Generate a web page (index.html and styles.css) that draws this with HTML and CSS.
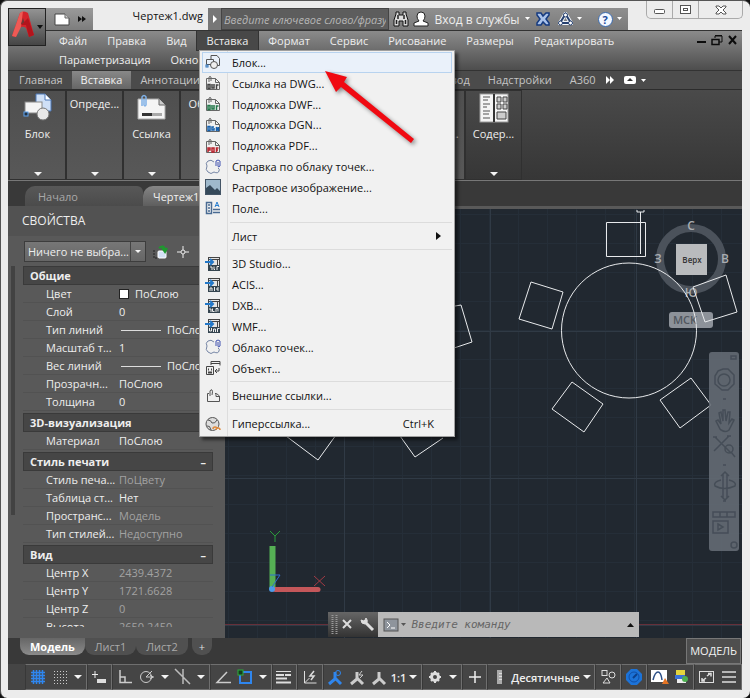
FILE: index.html
```html
<!DOCTYPE html>
<html lang="ru">
<head>
  <meta charset="UTF-8" />
  <meta name="viewport" content="width=device-width, initial-scale=1.0"/>
  <title>Чертеж1.dwg</title>
  <link rel="stylesheet" href="styles.css">
</head>
<body>
  <!-- shared icons -->
  <svg class="symbols" width="0" height="0">
    <symbol id="down" viewBox="0 0 6 4"><path d="M0 0h5l-2.5 3z" fill="#fff"/></symbol>
    <symbol id="doc" viewBox="0 0 16 16"><path d="M1.5 14.5v-11h9l4 4v7z"/><path d="M4 7V2q1-1 2 0v4M10.5 3.5v4h4"/></symbol>
    <symbol id="import" viewBox="0 0 16 16"><rect x="3.5" y="1.5" width="11" height="13" fill="#e4e4e4" stroke="#444"/><path d="M4 3.5h10M12.5 4v6" stroke="#444" fill="none"/><rect x="3" y="9" width="12" height="6" fill="#34444f"/><path d="M0 6h7M5 3l3 3-3 3" fill="none" stroke="#2378c8" stroke-width="2"/></symbol>
    <symbol id="cloud" viewBox="0 0 16 16"><path d="M9 3Q6 0 3 2 0 4 2 7 0 11 3 13 6 16 9 13 13 15 14 12 15 10 13 9" fill="none" stroke="#7585a5"/><path d="M11 7V2q2-2 4 0v5q-2 2-2 0V3" fill="none" stroke="#4052b0"/></symbol>
    <symbol id="scale" viewBox="0 0 17 17"><path d="M8 3v7l-6 5M8 9l6 6" fill="none" stroke-width="3"/></symbol>
  </svg>

  <div class="window">
    <header class="titlebar">
      <button class="app-button" aria-label="Меню приложения">
        <svg width="36" height="36" viewBox="0 0 36 36">
          <path d="M3 27 L11 4 Q15 1 19 4 L25 26 L20 28 L17 19 Q13 16 9 20 L7 28 Z" fill="#d4232b"/>
          <path d="M11 4 L14 2 L12 18 L7 28 L3 27 Z" fill="#ee5a55"/>
          <path d="M14 9 L16 15 L12 15 Z" fill="#6b3a36"/>
          <path d="M12 16 L17 16 L20 28 L25 26 L19 9 Z" fill="#b3141c"/>
          <path d="M28 16 h6 l-3 4 z" fill="#111"/>
        </svg>
      </button>
      <div class="quick">
        <button aria-label="Создать"><svg width="16" height="14" viewBox="0 0 16 14"><path d="M1 2 h10 l4 4 v7 h-14 z" fill="#fff" stroke="#444"/><path d="M11 2 v4 h4" fill="#ccc" stroke="#666"/></svg></button>
        <button aria-label="Еще"><svg width="10" height="8" viewBox="0 0 10 8"><path d="M1 1 l4 3 -4 3z M5 1 l4 3 -4 3z" fill="#111"/></svg></button>
      </div>
      <span class="doc-title">Чертеж1.dwg</span>
      <div class="infocenter">
        <button class="expand" aria-label="Развернуть"><svg width="6" height="8"><path d="M1 0 l4 4 -4 4z" fill="#fff"/></svg></button>
        <input class="search" type="text" placeholder="Введите ключевое слово/фразу" aria-label="Поиск">
        <button aria-label="Найти"><svg width="16" height="16" viewBox="0 0 16 16"><path d="M1 15 v-6 l2-6 V1 h3 v3 h4 V1 h3 v2 l2 6 v6 h-5 v-5 h-4 v5 z" fill="#ddd" stroke="#111"/><path d="M3.5 9 v4 M12.5 9 v4 M5 4 v4 M11 4 v4" stroke="#222" stroke-width="1.5"/></svg></button>
        <button class="login"><svg width="16" height="16" viewBox="0 0 16 16"><path d="M8 1 Q12 1 12 5 Q12 8 10 10 L15 12 V15 H1 V12 L6 10 Q4 8 4 5 Q4 1 8 1z" fill="#fff" stroke="#222"/></svg>Вход в службы<svg width="6" height="4"><use href="#down"/></svg></button>
        <button aria-label="Exchange"><svg width="14" height="14" viewBox="0 0 14 14"><path d="M1 1 h4 l2 3 3-3 h3 v2 l-3 4 3 4 v2 h-3 l-3-3 -2 3 h-4 v-2 l3-4 -3-4 z" fill="#a9c2ea" stroke="#153a80" stroke-width="1.5"/></svg></button>
        <button class="a360" aria-label="A360"><svg width="15" height="14" viewBox="0 0 15 14"><path d="M7.5 2 L13 11 H2 Z" fill="none" stroke="#f2f5fa" stroke-width="4"/><path d="M7.5 2 L13 11 H2 Z" fill="none" stroke="#26406f" stroke-width="2"/><g fill="#fff" stroke="#26406f"><circle cx="7.5" cy="3" r="2"/><circle cx="2.5" cy="11" r="2"/><circle cx="12.5" cy="11" r="2"/></g></svg><svg width="6" height="4"><use href="#down"/></svg></button>
        <button class="help" aria-label="Справка"><span class="help-mark">?</span><svg width="6" height="4"><use href="#down"/></svg></button>
      </div>
      <div class="window-buttons">
        <button aria-label="Свернуть"><svg width="12" height="10"><rect x=".5" y="4.5" width="10" height="4" rx="1" fill="#fff" stroke="#555"/></svg></button>
        <button aria-label="Восстановить"><svg width="12" height="10"><rect x=".5" y=".5" width="10" height="8" fill="#fff" stroke="#555"/><rect x="3.5" y="3.5" width="4" height="2" fill="#fff" stroke="#555"/></svg></button>
        <button class="close" aria-label="Закрыть"><svg width="12" height="10" viewBox="0 0 12 10"><path d="M1 1 h3 l2 2 2-2 h3 v1 l-3 3 3 3 v1 h-3 l-2-2 -2 2 h-3 v-1 l3-3 -3-3z" fill="#fff" stroke="#555"/></svg></button>
      </div>
    </header>

    <nav class="menubar">
      <div class="menus">
        <button>Файл</button>
        <button>Правка</button>
        <button>Вид</button>
        <button class="open">Вставка</button>
        <button>Формат</button>
        <button>Сервис</button>
        <button>Рисование</button>
        <button>Размеры</button>
        <button>Редактировать</button>
        <button>Параметризация</button>
        <button>Окно</button>
      </div>
      <div class="mdi">
        <svg width="44" height="12" viewBox="0 0 44 12" fill="none" stroke="#0c0c0c">
          <path d="M1 8 h9" stroke-width="2"/>
          <path d="M19 4 V2 h7 v6 h-3 M19 1.5 h7"/>
          <path d="M16 5.5 h7 v5 h-7 z" stroke-width="1.5"/>
          <path d="M33 2 l7 8 M40 2 l-7 8" stroke-width="2"/>
        </svg>
      </div>
    </nav>

    <nav class="ribbon-tabs">
      <div class="tabs-main">
        <button>Главная</button>
        <button class="active">Вставка</button>
        <button>Аннотации</button>
      </div>
      <div class="tabs-more">
        <button>Вывод</button>
        <button>Надстройки</button>
        <button>A360</button>
        <svg width="44" height="10" viewBox="0 0 44 10"><path d="M1 1l4 4-4 4z M5 1l4 4-4 4z" fill="#fff"/><rect x="19" y="1" width="12" height="8" rx="2" fill="#fff"/><path d="M22 6h6l-3-3z" fill="#333"/><path d="M36 4h5l-2.5 3z" fill="#fff"/></svg>
      </div>
    </nav>

    <section class="ribbon">
      <button class="panel">
        <svg width="32" height="32" viewBox="0 0 32 32"><path d="M14 2 h9 l6 6 v11 h-15z" fill="#cfe0f7" stroke="#4c78b8"/><path d="M23 2 v6 h6" fill="#fff" stroke="#4c78b8"/><rect x="3" y="10" width="17" height="11" fill="#f4f4f4" stroke="#888"/><circle cx="21" cy="22" r="6" fill="#e8e8e8" stroke="#777"/><rect x="2" y="20" width="4" height="4" fill="#234" stroke="#5fa3f0"/></svg>
        <span>Блок</span>
        <i class="caret"></i>
      </button>
      <button class="panel plain"><span>Опреде...</span><i class="caret"></i></button>
      <button class="panel">
        <svg width="32" height="32" viewBox="0 0 32 32"><path d="M2 7 h21 l6 6 v14 h-27z" fill="#f5f5f5" stroke="#aaa"/><path d="M23 7v6h6" fill="#ccc" stroke="#666"/><path d="M6 14 V5 q2-3 4 0 v8 q-1 2-2 0 V7" fill="none" stroke="#7fb0e6" stroke-width="1.5"/><rect x="6" y="21" width="10" height="3" fill="#333"/><rect x="16" y="21" width="10" height="3" fill="#aaa"/></svg>
        <span>Ссылка</span>
        <i class="caret"></i>
      </button>
      <button class="panel plain"><span>Облако</span><i class="caret"></i></button>
      <button class="panel plain" aria-label="Импорт"></button>
      <button class="panel plain" aria-label="Данные"></button>
      <button class="panel plain" aria-label="Связь"></button>
      <button class="panel"><span class="icon-space"></span><span>Полож...</span></button>
      <button class="panel">
        <svg width="32" height="32" viewBox="0 0 32 32"><rect x="2" y="2" width="28" height="28" fill="#f4f4f4" stroke="#999"/><path d="M16 2v28" stroke="#333" stroke-width="2"/><path d="M5 5h7M5 8h5M5 12h7M5 15h4M5 19h7M5 22h6M5 26h7" stroke="#888" stroke-width="1.5"/><path d="M19 5h4v5h-4zM25 5h4v5h-4zM19 12h4v5h-4zM25 12h4v5h-4zM19 20h9v7h-9z" fill="#ccc" stroke="#444"/></svg>
        <span>Содер...</span>
        <i class="caret"></i>
      </button>
    </section>

    <nav class="file-tabs">
      <button>Начало</button>
      <button class="active">Чертеж1*</button>
    </nav>

    <main class="work">
      <aside class="properties">
        <h2>СВОЙСТВА</h2>
        <div class="picker">
          <div class="select-box">
            <select aria-label="Объект"><option>Ничего не выбра...</option></select>
            <i class="caret"></i>
          </div>
          <svg width="16" height="16" viewBox="0 0 16 16"><path d="M1 6v8h5" fill="none" stroke="#222" stroke-dasharray="2 1"/><rect x="5" y="7" width="8" height="7" rx="1" fill="#d4e2f7" stroke="#fff"/><path d="M6 4 q5-4 6 2 M9 4l3 4 2-4" fill="none" stroke="#1d9a2e" stroke-width="2"/></svg>
          <svg width="14" height="14" viewBox="0 0 14 14" fill="none" stroke="#eee"><path d="M7 1v4M7 9v4M1 7h4M9 7h4"/><circle cx="7" cy="7" r="2"/></svg>
        </div>
        <div class="sections">
          <section>
            <h3>Общие</h3>
            <table>
              <tr><th>Цвет</th><td><i class="swatch"></i>ПоСлою</td></tr>
              <tr><th>Слой</th><td>0</td></tr>
              <tr><th>Тип линий</th><td><i class="line"></i>ПоСлою</td></tr>
              <tr><th>Масштаб т...</th><td>1</td></tr>
              <tr><th>Вес линий</th><td><i class="line"></i>ПоСлою</td></tr>
              <tr><th>Прозрачн...</th><td>ПоСлою</td></tr>
              <tr><th>Толщина</th><td>0</td></tr>
            </table>
          </section>
          <section>
            <h3>3D-визуализация</h3>
            <table>
              <tr><th>Материал</th><td>ПоСлою</td></tr>
            </table>
          </section>
          <section>
            <h3>Стиль печати</h3>
            <table>
              <tr><th>Стиль печа...</th><td class="off">ПоЦвету</td></tr>
              <tr><th>Таблица ст...</th><td>Нет</td></tr>
              <tr><th>Пространс...</th><td class="off">Модель</td></tr>
              <tr><th>Тип стилей...</th><td class="off">Недоступно</td></tr>
            </table>
          </section>
          <section>
            <h3>Вид</h3>
            <table>
              <tr><th>Центр X</th><td class="off">2439.4372</td></tr>
              <tr><th>Центр Y</th><td class="off">1721.6628</td></tr>
              <tr><th>Центр Z</th><td class="off">0</td></tr>
              <tr><th>Высота</th><td class="off">2650.2450</td></tr>
            </table>
          </section>
        </div>
      </aside>

      <div class="canvas">
        <svg class="drawing" width="100%" height="100%">
          <defs>
            <pattern id="minor" x="3" y="5" width="29" height="29" patternUnits="userSpaceOnUse"><path d="M.5 0v29M0 .5h29" stroke="#252e38" fill="none"/></pattern>
            <pattern id="major" x="119" y="122" width="146" height="147" patternUnits="userSpaceOnUse"><path d="M.5 0v147M0 .5h146" stroke="#303a45" fill="none"/></pattern>
          </defs>
          <rect width="100%" height="100%" fill="url(#minor)"/>
          <rect width="100%" height="100%" fill="url(#major)"/>
          <path d="M0 415.5h2000" stroke="#66303a"/>
          <!-- view cube -->
          <circle cx="466" cy="50" r="31" fill="none" stroke="#4b525b" stroke-width="8"/>
          <rect x="451" y="35" width="31" height="31" fill="#b9bbbd"/>
          <rect x="444" y="103" width="44" height="16" rx="3" fill="#8d9299"/>
          <g class="cube-text">
            <text x="466" y="21">С</text>
            <text x="433" y="54">З</text>
            <text x="500" y="54">В</text>
            <text x="466" y="88">Ю</text>
            <text class="face" x="467" y="54">Верх</text>
            <text class="wcs" x="460" y="115">МСК</text>
          </g>
          <!-- table and chairs -->
          <g fill="none" stroke="#e8eaec">
            <circle cx="404" cy="121.5" r="67.5"/>
            <path d="M381.5 13.5h39v34h-39z"/>
            <path d="M415.5 3v42M412 1v2h7v-2"/>
            <path d="M306 73l32 10-11 37-33-10z"/>
            <path d="M468 78l33-12 11 37-32 10z"/>
            <path d="M347 173l31 22-19 28-32-23z"/>
            <path d="M466 169l20 27-31 23-20-28z"/>
            <path d="M224 98l12-2 11 37-24 8"/>
            <path d="M61 227l32 24 18-25M175 227l15 21 28-19"/>
          </g>
          <!-- ucs icon -->
          <path d="M47.5 337v43" stroke="#55b054" stroke-width="6"/>
          <path d="M50 380.5h43" stroke="#c4575a" stroke-width="5" stroke-linecap="round"/>
          <circle cx="47" cy="380" r="3" fill="#4d9be8"/>
          <path d="M45 366h10l-8 12" fill="none" stroke="#2f6fd0"/>
          <path d="M45 322l5 5 5-5M50 327v6" fill="none" stroke="#2a9a3a"/>
          <path d="M89 367l11 10M100 367l-11 10" stroke="#a33a44"/>
        </svg>
        <div class="navbar">
          <svg width="30" height="199" viewBox="0 0 30 199" fill="none" stroke="#4a525c" stroke-width="1.5">
            <path d="M22 4l5 0v3h-5z"/>
            <path d="M9 19l5-2h5l6 6v9l-6 6h-6l-7-6v-8z"/><circle cx="15" cy="28" r="6"/>
            <path d="M14 47h3M14 113h3M14 149h3"/>
            <path d="M11 77l-4-8 2-1 3 4-2-11 2-1 2 9v-11h2l1 11 2-9 2 0-1 11 3-4 2 1-5 10q-3 3-8 0z"/>
            <path d="M6 85l16 16M20 84L5 99M4 85h4M18 84h4"/><circle cx="20" cy="97" r="4"/><path d="M22 100l4 5"/>
            <path d="M14 122v24M18 122v24M12 124l4-4 4 4M12 144l4 4 4-4"/><path d="M12 128q-8 2-6 6 9 5 20 0 2-4-6-6"/>
            <path d="M4 160h22v5H4zM11 160v5M18 160v5M4 169h15v12H4z"/><path d="M9 172l5 3-5 3z"/>
            <circle cx="25" cy="193" r="3"/>
          </svg>
        </div>
        <form class="command">
          <div class="grip">
            <svg width="50" height="25" viewBox="0 0 50 25" fill="none" stroke="#ddd"><path d="M4.5 3v19M8.5 3v19" stroke="#999" stroke-dasharray="1 1" stroke-width="2"/><path d="M15 8l8 8M23 8l-8 8" stroke-width="2"/><path d="M37 10l8 8" stroke-width="3"/><path d="M38 6q3 4-1 6-4 0-4-4l3 1 1-1z" fill="#ddd"/></svg>
          </div>
          <svg width="26" height="14" viewBox="0 0 26 14"><rect x="1" y="1" width="14" height="12" fill="#8e949c" stroke="#555"/><path d="M4 4l3 3-3 3M8 10h4" stroke="#fff" fill="none"/><path d="M18 5h5l-2.5 3z" fill="#555"/></svg>
          <input type="text" placeholder="Введите команду" aria-label="Команда">
          <svg width="10" height="6"><path d="M1 5h7l-3.5-4z" fill="#111"/></svg>
        </form>
      </div>
    </main>

    <nav class="layout-tabs">
      <button class="active">Модель</button>
      <button>Лист1</button>
      <button>Лист2</button>
      <button class="add">+</button>
      <button class="space-mode">МОДЕЛЬ</button>
    </nav>

    <footer class="status">
      <div class="group">
        <button aria-label="Сетка"><svg width="16" height="16"><path d="M3.5 1v14M6.5 1v14M9.5 1v14M12.5 1v14M1 3.5h14M1 6.5h14M1 9.5h14M1 12.5h14" stroke="#2f86ee" stroke-width="1.5"/></svg></button>
        <button aria-label="Шаг"><svg width="16" height="16"><path d="M2 2.5h14M2 5.5h14M2 8.5h14M2 11.5h14M2 14.5h14" stroke="#ccc" stroke-dasharray="1 2"/></svg></button>
        <button class="drop" aria-label="Параметры"><i class="caret"></i></button>
      </div>
      <div class="group">
        <button aria-label="Динамический ввод"><svg width="16" height="16"><path d="M1 5.5h6M4 2v7" stroke="#eee"/><rect x="6" y="10" width="9" height="4" fill="#ddd"/></svg></button>
      </div>
      <div class="group">
        <button aria-label="Орто"><svg width="16" height="16" fill="none" stroke="#ccc"><path d="M3 1v12.5h12M3 8h5v5" stroke-width="1.5"/></svg></button>
        <button aria-label="Отслеживание"><svg width="16" height="16" fill="none" stroke="#ccc"><circle cx="7" cy="8" r="5.5"/><path d="M7 8h8M7 8l6-6"/><path d="M11 6l3 2-3 2"/></svg></button>
        <button class="drop" aria-label="Параметры"><i class="caret"></i></button>
        <button aria-label="Изометрия"><svg width="18" height="18" stroke="#bbb"><path d="M1 1l15 15M9 1v15" stroke-width="1.5"/></svg></button>
        <button class="drop" aria-label="Параметры"><i class="caret"></i></button>
      </div>
      <div class="group">
        <button aria-label="Угол"><svg width="16" height="16" fill="none" stroke="#ccc"><path d="M12 3L2 13.5h14" stroke-width="1.5"/></svg></button>
        <button aria-label="Привязка"><svg width="16" height="16" fill="none"><rect x="3" y="3" width="11" height="11" stroke="#2f86ee" stroke-width="2"/><rect x="1" y="1" width="5" height="5" fill="#143d1a" stroke="#2cae3c"/></svg></button>
        <button class="drop" aria-label="Параметры"><i class="caret"></i></button>
      </div>
      <div class="group">
        <button aria-label="Вес линий"><svg width="18" height="16" stroke="#ddd"><path d="M1 2.5h15"/><path d="M1 6h8M10 6h6M1 9.5h11" stroke-width="2"/><path d="M1 13.5h15" stroke-width="2"/></svg></button>
      </div>
      <div class="group">
        <button aria-label="ПСК"><svg width="16" height="16" fill="none" stroke="#ddd"><path d="M2.5 2v12h12M2.5 14l5-5"/><path d="M12 2l-4 5h4l-3 4" stroke-width="1.5"/></svg></button>
      </div>
      <div class="group">
        <button aria-label="Аннотации"><svg width="17" height="17" fill="none" stroke="#2f86ee"><use href="#scale"/><circle cx="11" cy="4" r="2.5"/></svg></button>
        <button aria-label="Автомасштаб"><svg width="17" height="17" fill="none" stroke="#ccc"><use href="#scale"/><path d="M13 2l-3 4h4l-3 3"/></svg></button>
        <button aria-label="Масштаб"><svg width="17" height="17" stroke="#ccc"><use href="#scale"/></svg></button>
        <button class="text">1:1</button>
        <button class="drop" aria-label="Параметры"><i class="caret"></i></button>
      </div>
      <div class="group">
        <button aria-label="Рабочее пространство"><svg width="14" height="14" viewBox="0 0 14 14" fill="none" stroke="#ddd"><circle cx="7" cy="7" r="3.5" stroke-width="3"/><path d="M7 1v2M7 11v2M1 7h2M11 7h2M3 3l1 1M10 10l1 1M11 3l-1 1M4 10l-1 1" stroke-width="2"/></svg></button>
        <button class="drop" aria-label="Параметры"><i class="caret"></i></button>
      </div>
      <div class="group">
        <button aria-label="Добавить"><svg width="14" height="14" stroke="#eee"><path d="M7 1v12M1 7h12" stroke-width="1.5"/></svg></button>
      </div>
      <div class="group">
        <button aria-label="Единицы"><svg width="6" height="14"><rect width="5" height="14" fill="#aaa"/><path d="M2 3.5h3M2 6.5h3M2 9.5h3" stroke="#ddd"/></svg></button>
        <button class="text">Десятичные</button>
        <button class="drop" aria-label="Параметры"><i class="caret"></i></button>
      </div>
      <div class="group">
        <button aria-label="Быстрые свойства"><svg width="16" height="16" fill="none" stroke="#ddd"><rect x="2" y="1.5" width="5" height="5"/><circle cx="12" cy="6" r="3"/><path d="M7 9l3 5H3z"/></svg></button>
      </div>
      <div class="group">
        <button aria-label="Ускорение"><svg width="18" height="18"><path d="M6 1h6l5 5v6l-5 5H6l-5-5V6z" fill="#1c73d8"/><circle cx="9" cy="9" r="5" fill="none" stroke="#0f4fa8"/><path d="M8 10l4-4" stroke="#0b3f8c" stroke-width="2"/></svg></button>
      </div>
      <div class="group">
        <button aria-label="Монитор"><svg width="20" height="18"><rect x="1" y="2" width="16" height="12" fill="#fff"/><path d="M3 12q2-8 5-8t4 8" fill="none" stroke="#2c4f86" stroke-width="1.5"/><path d="M15 10l4 6h-7z" fill="#e37424"/></svg></button>
        <button aria-label="Изоляция"><svg width="16" height="16"><rect x="2" y="1" width="9" height="6" fill="#e3d53d"/><rect x="1" y="6" width="10" height="4" fill="#3b72d8"/><rect x="3" y="10" width="9" height="4" fill="#eee"/><circle cx="11" cy="10" r="3" fill="#4caf50"/></svg></button>
      </div>
      <div class="group">
        <button aria-label="Полный экран"><svg width="18" height="16" fill="none" stroke="#ddd"><rect x="1.5" y="2.5" width="14" height="11"/><path d="M9 7l4-3M10 4.5h3v3M8 9l-4 3M4 9v3h3" stroke-width="1.5"/></svg></button>
        <button aria-label="Адаптация"><svg width="16" height="14" stroke="#ddd"><path d="M1 2h14M1 7h14M1 12h14" stroke-width="1.5"/></svg></button>
      </div>
    </footer>

    <div class="popup" role="menu">
      <button class="hover"><svg width="16" height="16" fill="none" stroke="#555"><path d="M6 5V1.5h6l2.5 3v7h-3M1.5 5.5h7v5h-7z"/><circle cx="9" cy="11" r="3.5" fill="#eee"/><rect x="1" y="11" width="2" height="2" stroke="#2b70b8"/></svg>Блок...</button>
      <button><svg class="doc gray" width="16" height="16"><use href="#doc"/><path class="ink" d="M3 9.5v4h2v-4zM7 9v4h2v-4M11.5 14v-4h2"/></svg>Ссылка на DWG...</button>
      <button><svg class="doc green" width="16" height="16"><use href="#doc"/><path class="ink" d="M3 9.5v4h2v-4zM7 9v4h2v-4M11.5 14v-4h2"/></svg>Подложка DWF...</button>
      <button><svg class="doc blue" width="16" height="16"><use href="#doc"/><path class="ink" d="M3 9.5v4h2v-4zM9 10h-2v3h2v-2M11.5 14v-4l2 4v-4"/></svg>Подложка DGN...</button>
      <button><svg class="doc red" width="16" height="16"><use href="#doc"/><path class="ink" d="M3 14v-4h2v2h-2M7 10v4h2v-4zM11.5 14v-4h2M11 12h2"/></svg>Подложка PDF...</button>
      <button><svg width="16" height="16"><use href="#cloud"/></svg>Справка по облаку точек...</button>
      <button><svg width="16" height="16"><rect x=".5" y=".5" width="15" height="15" fill="#9fb9cc" stroke="#456"/><path d="M1 15V9l4-3 5 5 2-2 3 3v3z" fill="#35495a"/></svg>Растровое изображение...</button>
      <button><svg width="16" height="16" fill="none" stroke="#4a6b93"><path d="M1.5 2.5h5v11h-5zM3 5h2M3 8h2M3 11h2M8 9.5h7M8 12.5h7" stroke-width="1.5"/><path d="M10 7l2-5 2 5M10 5.5h4" stroke="#2b7fd0"/></svg>Поле...</button>
      <hr>
      <button><span class="no-icon"></span>Лист<svg class="sub" width="6" height="8"><path d="M0 0l5 4-5 4z" fill="#111"/></svg></button>
      <hr>
      <button><svg class="imp" width="16" height="16"><use href="#import"/><path d="M5 11h2v3M9 10.5v3h1M12 14v-3.5h2"/></svg>3D Studio...</button>
      <button><svg class="imp" width="16" height="16"><use href="#import"/><path d="M5 14v-3h2v3M9.5 10v4M14 11h-2v2h2"/></svg>ACIS...</button>
      <button><svg class="imp" width="16" height="16"><use href="#import"/><path d="M4 11h2v3M7.5 10.5v3h2M11 14v-3.5h2v3"/></svg>DXB...</button>
      <button><svg class="imp" width="16" height="16"><use href="#import"/><path d="M4.5 10v3h2v-3M8.5 14v-3h2v3M12.5 14v-3.5h2"/></svg>WMF...</button>
      <button><svg width="16" height="16"><use href="#cloud"/></svg>Облако точек...</button>
      <button><svg width="16" height="16" fill="none" stroke="#444"><path d="M6 5V1.5h9v4M6 3.5h9M1.5 6.5h7v8h-7z"/><path d="M3 9.5h1M6 9.5h1M3 12.5h4" stroke-width="2"/><path d="M14 8v3h-4M12 9l-2 2 2 2"/></svg>Объект...</button>
      <hr>
      <button><svg width="16" height="16" fill="none" stroke="#555"><path d="M4 5.5H2.5v8h12V8l-3-2.5H10M11 6v2.5h3"/><path d="M5 8V3q1-2 2-1 1 1 0 5"/></svg>Внешние ссылки...</button>
      <hr>
      <button><svg width="16" height="16" fill="none" stroke="#555"><circle cx="7.5" cy="8" r="6.5" fill="#ddd"/><path d="M3 4q3 0 4 3 3 1 5-3M2 10q3-1 4 4"/><path d="M8 13q0-2 2-2t2 2M11 14q0-2 2-2t2 2" stroke="#e08a3c" stroke-width="1.5"/></svg>Гиперссылка...<kbd>Ctrl+K</kbd></button>
    </div>

    <svg class="pointer" width="100" height="84" viewBox="0 0 100 84">
      <path d="M1 3L23 9 20 14 90 71 87 75 17 19 12 24Z" fill="#f00a12"/>
    </svg>
  </div>
</body>
</html>
```
FILE: styles.css
```css
* {
  box-sizing: border-box;
}

body {
  margin: 0;
  background: #111;
  font-family: "Open Sans", "Noto Sans", sans-serif;
  font-size: 11px;
  color: #eee;
}

button {
  border: 0;
  padding: 0;
  background: none;
  color: inherit;
  font: inherit;
  white-space: nowrap;
}

svg {
  display: block;
  flex: none;
}

.window {
  position: relative;
  display: flex;
  flex-direction: column;
  min-height: 100vh;
  padding: 7px 8px 8px 7px;
  background: #ececec;
  border: 1px solid #555;
  border-width: 1px 0 0 1px;
  border-radius: 7px;
}

/* title bar */
.titlebar {
  display: flex;
  height: 22px;
  padding-left: 38px;
}

.app-button {
  position: absolute;
  left: 7px;
  top: 7px;
  width: 38px;
  height: 38px;
  background: linear-gradient(#939393, #454545);
  border: 1px solid #222;
  z-index: 1;
}

.quick {
  display: flex;
  align-items: center;
  gap: 7px;
  width: 47px;
  padding-left: 8px;
  background: linear-gradient(#9a9a9a, #7d7d7d);
}

.doc-title {
  flex: 0 0 115px;
  padding-right: 5px;
  text-align: right;
  line-height: 16px;
  color: #111;
}

.infocenter {
  display: flex;
  align-items: stretch;
  width: 420px;
  background: linear-gradient(#8f8f8f, #7a7a7a);
}

.infocenter button {
  display: flex;
  align-items: center;
  justify-content: center;
  width: 24px;
}

.infocenter .expand {
  width: 13px;
  background: #777;
}

.search {
  width: 168px;
  padding: 0 2px;
  border: 1px solid #444;
  background: #5d5d5d;
  color: #ddd;
  font: italic 11px "Open Sans", sans-serif;
}

.search::placeholder {
  color: #b5b5b5;
}

.infocenter .login {
  width: 118px;
  gap: 5px;
  font-size: 12px;
}

.infocenter .a360,
.infocenter .help {
  width: 30px;
  gap: 4px;
}

.infocenter .help {
  margin-left: 10px;
}

.help-mark {
  width: 15px;
  height: 15px;
  border-radius: 8px;
  background: #f4f8ff;
  border: 1px solid #3a6bb0;
  color: #1c4c9c;
  font-weight: bold;
  line-height: 13px;
}

.window-buttons {
  position: absolute;
  top: 0;
  right: 7px;
  display: flex;
  height: 18px;
  border: 1px solid #aaa;
  border-top: 0;
  border-radius: 0 0 5px 5px;
}

.window-buttons button {
  display: flex;
  align-items: center;
  justify-content: center;
  width: 26px;
  border-right: 1px solid #aaa;
}

.window-buttons .close {
  width: 43px;
  border-right: 0;
}

/* menu bar */
.menubar {
  display: flex;
  justify-content: space-between;
  padding: 0 2px 1px 41px;
  background: linear-gradient(#8b8b8b, #4d4d4d);
  border-top: 1px solid #333;
}

.menus {
  display: flex;
  flex-wrap: wrap;
}

.menus button {
  height: 19px;
  padding: 0 10px;
  line-height: 18px;
}

.menus .open {
  background: #484848;
  outline: 1px solid #333;
}

.mdi {
  padding-top: 3px;
}

/* ribbon */
.ribbon-tabs {
  display: flex;
  height: 19px;
  background: #4b4b4b;
  border-top: 1px solid #333;
  color: #c4c4c4;
}

.tabs-main,
.tabs-more {
  display: flex;
  align-items: center;
}

.tabs-main {
  flex: 0 0 418px;
  padding-left: 2px;
}

.ribbon-tabs button {
  height: 18px;
  padding: 0 9px;
  line-height: 18px;
}

.ribbon-tabs .active {
  background: linear-gradient(#888, #666);
  color: #f2f2f2;
}

.ribbon {
  display: flex;
  gap: 2px;
  height: 92px;
  padding: 1px 2px;
  background: linear-gradient(#4a4a4a, #363636);
  border-top: 1px solid #2c2c2c;
  border-bottom: 1px solid #777;
}

.panel {
  display: flex;
  flex-direction: column;
  align-items: center;
  width: 55px;
  padding-top: 1px;
  background: linear-gradient(#4f4f4f, #585858);
  outline: 1px solid #303030;
}

.panel span {
  line-height: 16px;
}

.panel svg,
.icon-space {
  height: 32px;
  margin-bottom: 2px;
}

.panel.plain {
  padding-top: 5px;
}

.panel .caret {
  margin: auto 0 3px;
}

.panel:last-child {
  background: none;
}

.caret {
  border: 4px solid transparent;
  border-top-color: #f4f4f4;
  border-bottom: 0;
}

/* drawing tabs */
.file-tabs {
  display: flex;
  height: 25px;
  padding: 5px 0 0 17px;
  background: #393939;
}

.file-tabs button {
  width: 118px;
  padding-left: 13px;
  background: linear-gradient(#585858, #4b4b4b);
  border-radius: 10px 6px 0 0;
  color: #a8a8a8;
  text-align: left;
}

.file-tabs .active {
  padding-left: 10px;
  background: linear-gradient(#858585, #5e5e5e);
  color: #f2f2f2;
}

.work {
  display: flex;
  flex: 1 1 0;
  min-height: 0;
}

/* properties palette */
.properties {
  display: flex;
  flex-direction: column;
  flex: 0 0 217px;
  min-height: 0;
  padding-bottom: 11px;
  background: #595959;
}

.properties h2 {
  margin: 0 0 5px;
  padding-left: 14px;
  background: #525252;
  font-size: 12px;
  font-weight: normal;
  line-height: 30px;
}

.picker {
  display: flex;
  align-items: center;
  gap: 7px;
  padding: 0 16px;
  margin-bottom: 4px;
}

.select-box {
  display: flex;
  align-items: center;
  width: 122px;
  height: 21px;
  padding-right: 4px;
  border: 1px solid #3d3d3d;
  background: linear-gradient(#777, #666);
}

.select-box select {
  appearance: none;
  flex: 1;
  min-width: 0;
  height: 19px;
  margin-right: 4px;
  padding: 0 0 0 3px;
  border: 0;
  border-right: 1px solid #444;
  background: none;
  color: #eee;
  font: inherit;
}

.select-box .caret {
  border-width: 3px 3px 0;
}

.sections {
  flex: 1 1 0;
  min-height: 0;
  margin-left: 3px;
  padding: 0 12px;
  border: solid;
  border-width: 0 0 0 4px;
  border-image: linear-gradient(#424242 69%, #595959 69%) 1;
  overflow: hidden;
}

.sections section {
  margin: 0 0 2px -4px;
}

.sections h3 {
  display: flex;
  justify-content: space-between;
  margin: 0;
  padding: 0 6px;
  background: #464646;
  border: 1px solid #3a3a3a;
  font-size: 11px;
  font-weight: bold;
  line-height: 17px;
}

.sections h3::after {
  content: "–";
}

.sections table {
  width: 100%;
  table-layout: fixed;
  border-spacing: 0;
}

.sections tr {
  height: 18px;
}

.sections th,
.sections td {
  padding: 0 0 0 6px;
  border-bottom: 1px solid #525252;
  font-weight: normal;
  line-height: 17px;
  text-align: left;
  white-space: nowrap;
}

.sections th {
  width: 90px;
  padding-left: 23px;
}

.sections .off {
  color: #a2a2a2;
}

.swatch {
  display: inline-block;
  width: 10px;
  height: 10px;
  margin-right: 6px;
  background: #fff;
  border: 1px solid #222;
  vertical-align: -1px;
}

.line {
  display: inline-block;
  width: 40px;
  margin: 0 6px 3px 2px;
  border-top: 1px solid #ddd;
}

/* model space */
.canvas {
  position: relative;
  flex: 1;
  min-width: 0;
  border-top: 3px solid #595959;
  background: #212830;
}

.drawing {
  position: absolute;
  inset: 0;
}

.cube-text {
  fill: #a9adb1;
  font-size: 12px;
  font-weight: 600;
  text-anchor: middle;
}

.cube-text .face {
  fill: #333;
  font-size: 8px;
}

.cube-text .wcs {
  fill: #50565e;
  font-size: 11px;
}

.navbar {
  position: absolute;
  top: 143px;
  right: 3px;
  background: #646b74;
  opacity: .9;
  border-radius: 3px;
}

.command {
  position: absolute;
  left: 20%;
  right: 20%;
  bottom: 1px;
  display: flex;
  align-items: center;
  height: 25px;
  padding-right: 3px;
  background: #b9b9b9;
}

.grip {
  margin-right: 5px;
  background: linear-gradient(#666, #333);
}

.command input {
  flex: 1;
  min-width: 0;
  border: 0;
  background: none;
  font: italic 11px "DejaVu Sans Mono", monospace;
}

.command input::placeholder {
  color: #666;
}

/* layout tabs */
.layout-tabs {
  display: flex;
  height: 26px;
  padding: 0 1px 0 12px;
  background: #393939;
}

.layout-tabs button {
  height: 17px;
  padding: 0 10px;
  background: #505050;
  border-radius: 0 0 9px 9px;
  color: #aaa;
  line-height: 16px;
}

.layout-tabs .active {
  background: linear-gradient(#666, #8b8b8b);
  color: #fff;
  font-weight: bold;
}

.layout-tabs .add {
  margin-left: 4px;
  padding: 0 7px;
  color: #ddd;
}

.layout-tabs .space-mode {
  height: 26px;
  margin-left: auto;
  padding: 0 3px;
  background: #4e4e4e;
  border: 1px solid #777;
  border-radius: 0;
  color: #f2f2f2;
}

/* status bar */
.status {
  display: flex;
  height: 26px;
  padding-left: 17px;
  background: #454545;
}

.group {
  display: flex;
  flex: 1 1 auto;
  justify-content: center;
  border: 1px solid #6f6f6f;
  border-left-color: #383838;
}

.group button {
  display: flex;
  align-items: center;
  justify-content: center;
  width: 22px;
}

.group .drop {
  width: 14px;
}

.group .text {
  width: auto;
  font-weight: 600;
}

/* drop-down menu */
.popup {
  position: absolute;
  left: 198px;
  top: 49px;
  display: flex;
  flex-direction: column;
  width: 256px;
  height: 387px;
  padding: 1px 2px 2px;
  background: linear-gradient(90deg, #f0f0f0 27px, #ddd 27px, #ddd 28px, #f1f1f1 28px);
  border: 1px solid #a0a0a0;
  box-shadow: 3px 3px 3px rgba(0,0,0,.5);
  color: #111;
}

.popup button {
  display: flex;
  flex: 1;
  align-items: center;
  gap: 11px;
  padding: 0 17px 0 2px;
  border: 1px solid transparent;
  text-align: left;
}

.popup .hover {
  background: #eaf1fa;
  border-color: #b8d3ef;
}

.popup hr {
  width: 222px;
  height: 1px;
  margin: 3px 0 3px auto;
  border: 0;
  background: #dcdcdc;
}

.no-icon {
  width: 16px;
}

.popup .sub {
  margin-left: auto;
  margin-right: -8px;
}

.popup kbd {
  margin-left: auto;
  font: inherit;
}

.doc {
  fill: none;
  stroke: #666;
}

.doc .ink {
  stroke-width: 1.5;
}

.gray .ink {
  stroke: #444;
}

.green .ink {
  stroke: #23774a;
}

.blue .ink {
  stroke: #1660ad;
}

.red .ink {
  stroke: #b8222c;
}

.imp {
  fill: none;
  stroke: #eee;
}

.imp use {
  stroke: none;
}

.symbols {
  position: absolute;
}

.pointer {
  position: absolute;
  left: 323px;
  top: 67px;
  filter: drop-shadow(2px 2px 2px rgba(0,0,0,.45));
}
```
